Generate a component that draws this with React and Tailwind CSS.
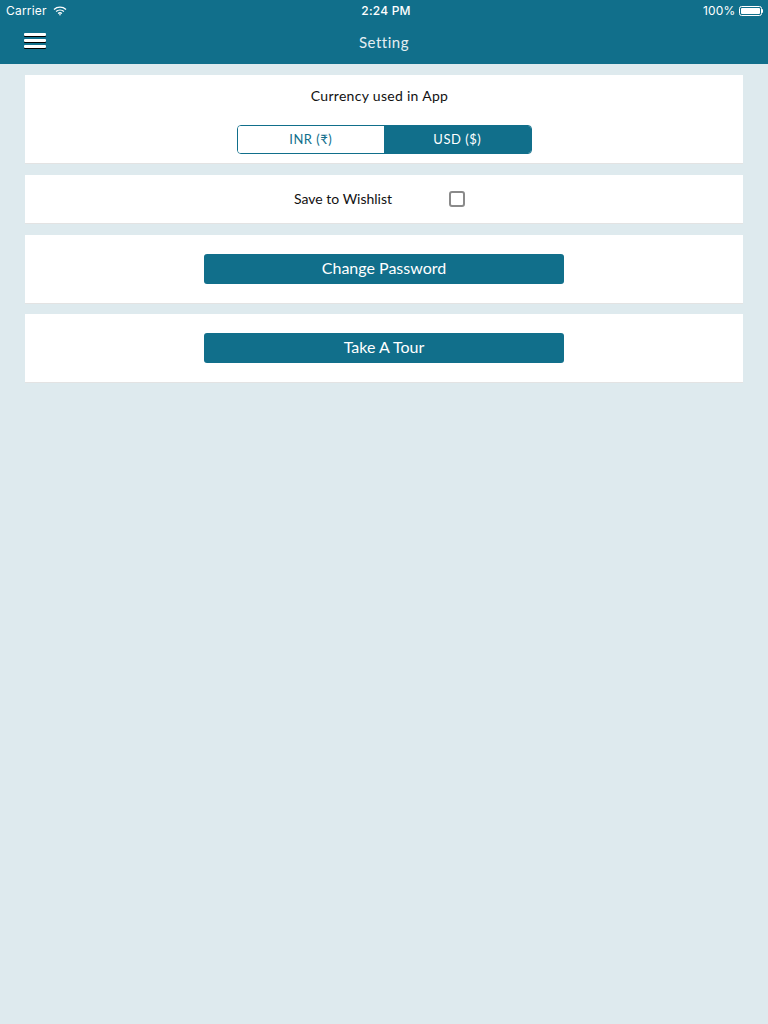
export default function App() {
  return (
    <div className="flex min-h-[1024px] flex-col bg-[#deeaee] font-['Lato',sans-serif] text-[#111]">
      <header className="h-[64px] bg-[#116f8b] text-white">
        <div className="flex h-[21px] items-center justify-between pl-[6px] pr-[5px] font-['Inter',sans-serif] text-[12px] tracking-[0.2px]">
          <div className="flex w-[120px] items-center gap-[6px]">
            <span>Carrier</span>
            <svg width="14" height="10" viewBox="0 0 14 10" fill="none" stroke="white" strokeWidth="1.4">
              <path d="M1 3.4C4.4.4 9.6.4 13 3.4" />
              <path d="M3.1 5.5C5.3 3.6 8.7 3.6 10.9 5.5" />
              <path d="M5.1 7.5C6.2 6.7 7.8 6.7 8.9 7.5" />
              <path d="M7 9.8 5.9 8.6C6.5 8.2 7.5 8.2 8.1 8.6Z" fill="white" stroke="none" />
            </svg>
          </div>
          <span className="ml-[3px] font-medium">2:24 PM</span>
          <div className="flex w-[120px] items-center justify-end gap-[3px]">
            <span>100%</span>
            <div className="flex items-center">
              <div className="h-[10px] w-[23px] rounded-[2.5px] border border-white p-[1px]">
                <div className="h-full w-full rounded-[1px] bg-white" />
              </div>
              <div className="h-[4px] w-[1.5px] rounded-r-[1px] bg-white" />
            </div>
          </div>
        </div>
        <div className="relative flex h-[43px] items-center justify-center">
          <div className="absolute left-[24px] top-[12px] flex w-[22px] flex-col gap-[3px]">
            <div className="h-[3px] rounded-[1px] bg-white shadow-[0_1px_0_#000]" />
            <div className="h-[3px] rounded-[1px] bg-white shadow-[0_1px_0_#000]" />
            <div className="h-[3px] rounded-[1px] bg-white shadow-[0_1px_0_#000]" />
          </div>
          <h1 className="text-[15px] tracking-[0.5px] text-[#e4eef2]">Setting</h1>
        </div>
      </header>

      <main className="flex flex-col px-[25px] pt-[11px]">
        <section className="flex h-[89px] flex-col items-center border-b border-[#e3e3e3] bg-white pt-[12px]">
          <p className="mr-[9px] text-[14px] leading-[17px] tracking-[0.3px]">Currency used in App</p>
          <div className="mt-[21px] flex h-[29px] w-[295px] overflow-hidden rounded-[4px] border border-[#116f8b] text-[13px] tracking-[0.5px]">
            <div className="flex flex-1 items-center justify-center bg-white text-[#116f8b]">INR (₹)</div>
            <div className="flex flex-1 items-center justify-center bg-[#116f8b] text-white">USD ($)</div>
          </div>
        </section>

        <section className="mt-[11px] flex h-[49px] items-center border-b border-[#e3e3e3] bg-white">
          <span className="mb-[1px] ml-[269px] text-[14px]">Save to Wishlist</span>
          <div className="ml-[57px] h-[16px] w-[16px] rounded-[3px] border-2 border-[#8a8a8a] bg-white" />
        </section>

        <section className="mt-[11px] flex h-[69px] items-center justify-center border-b border-[#e3e3e3] bg-white pb-[1px]">
          <button className="h-[30px] w-[360px] rounded-[3px] bg-[#116f8b] pb-[2px] text-[16px] text-white">Change Password</button>
        </section>

        <section className="mt-[10px] flex h-[69px] items-center justify-center border-b border-[#e3e3e3] bg-white pb-[1px]">
          <button className="h-[30px] w-[360px] rounded-[3px] bg-[#116f8b] pb-[2px] text-[16px] text-white">Take A Tour</button>
        </section>
      </main>
    </div>
  );
}
